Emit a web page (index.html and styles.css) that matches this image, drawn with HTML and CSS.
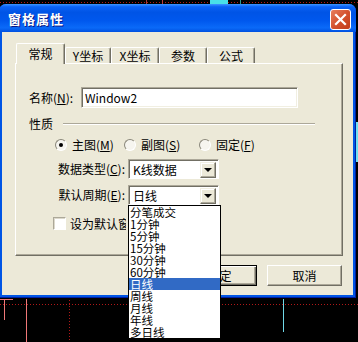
FILE: index.html
```html
<!DOCTYPE html>
<html lang="zh-CN">
<head>
    <meta charset="UTF-8">
    <title>窗格属性</title>
    <link rel="stylesheet" href="styles.css">
</head>
<body>

<div class="chart">
    <div class="dots-h dots-top"></div>
    <div class="dots-h dots-bottom"></div>
    <div class="mark red-a"></div>
    <div class="mark red-b"></div>
    <div class="mark cyan-top"></div>
    <div class="mark teal-top"></div>
    <div class="mark pink-h"></div>
    <div class="mark pink-v1"></div>
    <div class="mark pink-v2"></div>
    <div class="dots-v"></div>
    <div class="mark cyan-v"></div>
    <div class="mark cyan-edge"></div>
</div>

<div class="dialog">
    <div class="titlebar">
        <span class="title">窗格属性</span>
        <div class="close-btn">
            <svg width="13" height="13" viewBox="0 0 13 13">
                <path d="M2 2 L11 11 M11 2 L2 11" stroke="#fff" stroke-width="2.2" stroke-linecap="square"/>
            </svg>
        </div>
    </div>

    <div class="client">
        <div class="tabs">
            <div class="tab active" style="width:49px">常规</div>
            <div class="tab" style="width:46px">Y坐标</div>
            <div class="tab" style="width:48px">X坐标</div>
            <div class="tab" style="width:48px">参数</div>
            <div class="tab" style="width:48px">公式</div>
        </div>

        <div class="panel">
            <div class="name-row">
                <label class="name-label">名称(<u>N</u>):</label>
                <div class="textbox">Window2</div>
            </div>

            <div class="group-head">
                <span>性质</span>
                <div class="sep"></div>
            </div>

            <div class="radios">
                <div class="radio-item" style="width:69px"><span class="radio checked"></span>主图(<u>M</u>)</div>
                <div class="radio-item" style="width:75px"><span class="radio"></span>副图(<u>S</u>)</div>
                <div class="radio-item"><span class="radio"></span>固定(<u>F</u>)</div>
            </div>

            <div class="field">
                <label class="field-label">数据类型(<u>C</u>):</label>
                <div class="combo">
                    <span class="combo-text">K线数据</span>
                    <span class="combo-btn"></span>
                </div>
            </div>

            <div class="field field-period">
                <label class="field-label">默认周期(<u>E</u>):</label>
                <div class="combo">
                    <span class="combo-text">日线</span>
                    <span class="combo-btn"></span>
                    <ul class="droplist">
                        <li>分笔成交</li>
                        <li>1分钟</li>
                        <li>5分钟</li>
                        <li>15分钟</li>
                        <li>30分钟</li>
                        <li>60分钟</li>
                        <li class="selected">日线</li>
                        <li>周线</li>
                        <li>月线</li>
                        <li>年线</li>
                        <li>多日线</li>
                    </ul>
                </div>
            </div>

            <div class="check-row">
                <span class="checkbox"></span>
                <span class="check-text">设为默认窗口</span>
            </div>
        </div>

        <div class="buttons">
            <button class="btn default">确定</button>
            <button class="btn">取消</button>
        </div>
    </div>
</div>

</body>
</html>
```

FILE: styles.css
```css
body {
    margin: 0;
    width: 358px;
    height: 342px;
    overflow: hidden;
    background: #000;
    font-family: "Noto Sans CJK SC", "Liberation Sans", sans-serif;
    font-size: 12px;
    color: #000;
    position: relative;
}

/* chart behind the dialog */
.chart {
    position: absolute;
    left: 0;
    top: 0;
    width: 358px;
    height: 342px;
}
.dots-h {
    position: absolute;
    left: 0;
    width: 358px;
    height: 1px;
    background: repeating-linear-gradient(to right, #b01818 0 1px, transparent 1px 3px);
}
.dots-top { top: 2px; }
.dots-bottom { top: 304px; }
.dots-v {
    position: absolute;
    left: 69px;
    top: 300px;
    width: 1px;
    height: 42px;
    background: repeating-linear-gradient(to bottom, #b01818 0 1px, transparent 1px 3px);
}
.mark { position: absolute; }
.red-a { left: 146px; top: 0; width: 1px; height: 5px; background: #a03838; }
.red-b { left: 162px; top: 0; width: 1px; height: 5px; background: #c03c3c; }
.cyan-top { left: 210px; top: 0; width: 18px; height: 5px; background: #48e0e8; }
.teal-top { left: 240px; top: 0; width: 1px; height: 5px; background: #2a9a90; }
.pink-h { left: 0; top: 299px; width: 13px; height: 1px; background: #f07878; }
.pink-v1 { left: 4px; top: 299px; width: 1px; height: 21px; background: #f07878; }
.pink-v2 { left: 26px; top: 299px; width: 1px; height: 43px; background: #f07878; }
.cyan-v { left: 283px; top: 299px; width: 1px; height: 33px; background: #70d8e8; }
.cyan-edge { left: 356px; top: 122px; width: 2px; height: 40px; background: #70e0f0; }

/* window */
.dialog {
    position: absolute;
    left: -1px;
    top: 4px;
    width: 357px;
    height: 294px;
    background: #0055e5;
    border-radius: 7px 7px 0 0;
    box-shadow: inset -1px -1px 0 #001ea0;
}
.titlebar {
    height: 28px;
    box-sizing: border-box;
    display: flex;
    align-items: flex-start;
    justify-content: space-between;
    padding: 5px 5px 0 9px;
    border-radius: 7px 7px 0 0;
    background: linear-gradient(to bottom, #3d95ff 0%, #0a62f4 10%, #0054e6 30%, #0058ee 60%, #0a6af8 85%, #0050e0 100%);
}
.title {
    color: #fff;
    font-weight: bold;
    font-size: 13px;
    line-height: 20px;
    letter-spacing: 1px;
    text-shadow: 1px 1px 0 #0a1883;
}
.close-btn {
    width: 21px;
    height: 21px;
    box-sizing: border-box;
    border: 1px solid #fff;
    border-radius: 3px;
    background: linear-gradient(135deg, #e8805f 0%, #d4522e 50%, #c23d1a 100%);
    display: flex;
    align-items: center;
    justify-content: center;
}

.client {
    margin: 0 3px;
    height: 263px;
    background: #ece9d8;
    box-sizing: border-box;
    padding-top: 11px;
    position: relative;
}

/* tabs */
.tabs {
    display: flex;
    align-items: flex-end;
    height: 20px;
    margin-left: 14px;
}
.tab {
    height: 16px;
    box-sizing: border-box;
    text-align: center;
    line-height: 15px;
    border-top: 1px solid #fff;
    border-left: 1px solid #fff;
    border-right: 1px solid #716f64;
    box-shadow: inset -1px 0 0 #aca899;
    border-radius: 2px 2px 0 0;
    background: #ece9d8;
}
.tab.active {
    height: 21px;
    margin-bottom: -1px;
    line-height: 19px;
    position: relative;
    z-index: 1;
}

.panel {
    margin: 0 10px 0 13px;
    height: 193px;
    box-sizing: border-box;
    border-top: 1px solid #fff;
    border-left: 1px solid #fff;
    border-right: 1px solid #716f64;
    border-bottom: 1px solid #716f64;
    box-shadow: inset -1px -1px 0 #aca899;
    padding-top: 23px;
}

.name-row {
    display: flex;
    align-items: center;
    padding-left: 13px;
}
.name-label {
    width: 52px;
    line-height: 14px;
}
.textbox {
    width: 217px;
    height: 21px;
    box-sizing: border-box;
    background: #fff;
    border-top: 1px solid #aca899;
    border-left: 1px solid #aca899;
    border-right: 1px solid #fff;
    border-bottom: 1px solid #fff;
    box-shadow: inset 1px 1px 0 #716f64, inset -1px -1px 0 #f1efe2;
    padding: 0 3px;
    line-height: 19px;
}

.group-head {
    display: flex;
    align-items: center;
    margin-top: 10px;
    padding-left: 13px;
    height: 12px;
    line-height: 12px;
}
.sep {
    width: 252px;
    height: 1px;
    margin-left: 10px;
    background: #aca899;
    border-bottom: 1px solid #fff;
}

.radios {
    display: flex;
    align-items: center;
    margin-top: 8px;
    padding-left: 39px;
    height: 14px;
    line-height: 14px;
}
.radio-item {
    display: flex;
    align-items: center;
}
.radio {
    width: 12px;
    height: 12px;
    box-sizing: border-box;
    border-radius: 50%;
    border: 1px solid;
    border-color: #8a877a #fff #fff #8a877a;
    background: #f6f5ef;
    margin-right: 5px;
    display: flex;
    align-items: center;
    justify-content: center;
}
.radio.checked::after {
    content: "";
    width: 4px;
    height: 4px;
    border-radius: 50%;
    background: #000;
}

.field {
    display: flex;
    align-items: center;
    margin-top: 7px;
}
.field-period { margin-top: 6px; }
.field-label {
    width: 109px;
    text-align: right;
    margin-right: 3px;
    line-height: 14px;
}
.combo {
    width: 91px;
    height: 20px;
    box-sizing: border-box;
    background: #fff;
    border-top: 1px solid #aca899;
    border-left: 1px solid #aca899;
    border-right: 1px solid #fff;
    border-bottom: 1px solid #fff;
    box-shadow: inset 1px 1px 0 #716f64;
    display: flex;
    align-items: center;
    justify-content: space-between;
    padding: 2px 2px 1px 4px;
    position: relative;
}
.combo-text {
    line-height: 16px;
    font-size: 12px;
}
.combo-btn {
    width: 16px;
    height: 16px;
    box-sizing: border-box;
    background: #ece9d8;
    border-top: 1px solid #f1efe2;
    border-left: 1px solid #f1efe2;
    border-right: 1px solid #716f64;
    border-bottom: 1px solid #716f64;
    box-shadow: inset -1px -1px 0 #aca899, inset 1px 1px 0 #fff;
    display: flex;
    align-items: center;
    justify-content: center;
}
.combo-btn::after {
    content: "";
    border-left: 4px solid transparent;
    border-right: 4px solid transparent;
    border-top: 4px solid #000;
}

.droplist {
    position: absolute;
    left: -1px;
    top: 19px;
    z-index: 5;
    width: 93px;
    margin: 0;
    padding: 0;
    list-style: none;
    background: #fff;
    border: 1px solid #000;
    box-sizing: border-box;
}
.droplist li {
    height: 12px;
    line-height: 12px;
    font-size: 11.5px;
    padding-left: 1px;
    white-space: nowrap;
}
.droplist li.selected {
    background: #316ac5;
    color: #fff;
}

.check-row {
    display: flex;
    align-items: center;
    margin-top: 12px;
    padding-left: 37px;
    line-height: 13px;
}
.checkbox {
    width: 13px;
    height: 13px;
    box-sizing: border-box;
    background: #fff;
    border-top: 1px solid #aca899;
    border-left: 1px solid #aca899;
    border-right: 1px solid #fff;
    border-bottom: 1px solid #fff;
    box-shadow: inset 1px 1px 0 #dcd9cc;
    margin-right: 4px;
}
/* the open list covers the end of this label */
.check-text {
    width: 56px;
    overflow: hidden;
    white-space: nowrap;
}

.buttons {
    display: flex;
    justify-content: flex-end;
    gap: 10px;
    margin-top: 9px;
    padding-right: 11px;
}
.btn {
    width: 75px;
    height: 21px;
    box-sizing: border-box;
    font-family: inherit;
    font-size: 12px;
    line-height: 14px;
    padding: 0;
    background: #ece9d8;
    color: #000;
    border-top: 1px solid #fff;
    border-left: 1px solid #fff;
    border-right: 1px solid #716f64;
    border-bottom: 1px solid #716f64;
    box-shadow: inset -1px -1px 0 #aca899;
}
.btn.default {
    border: 1px solid #000;
    box-shadow: inset 1px 1px 0 #fff, inset -1px -1px 0 #716f64, inset -2px -2px 0 #aca899;
}
```
